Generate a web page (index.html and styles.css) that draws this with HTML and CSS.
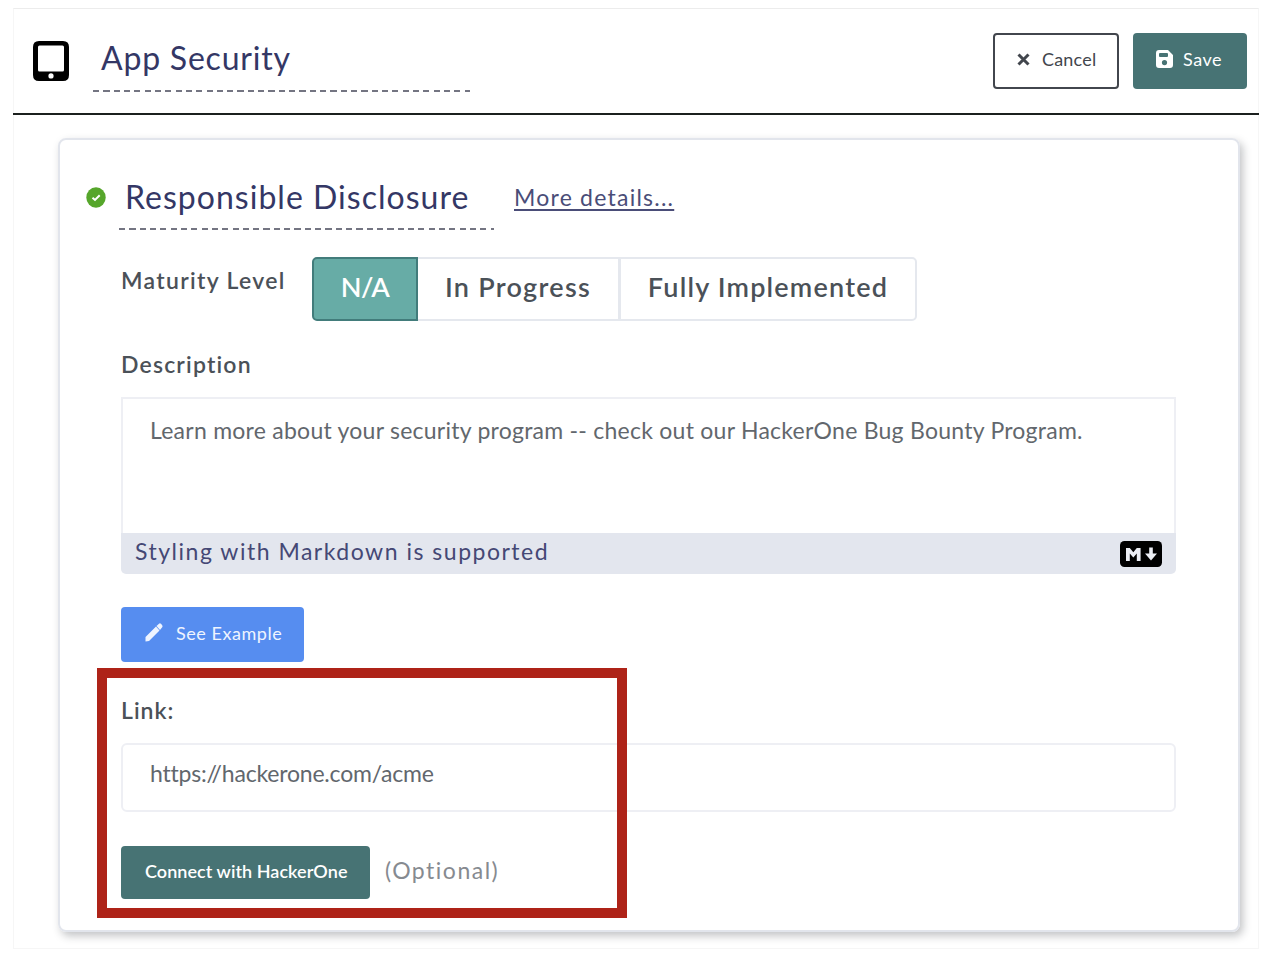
FILE: index.html
```html
<!DOCTYPE html>
<html lang="en">
<head>
<meta charset="utf-8">
<title>App Security</title>
<link rel="stylesheet" href="styles.css">
</head>
<body>
<main class="frame">
  <header class="header">
    <svg class="tablet" viewBox="0 0 36 40"><path fill="#000" fill-rule="evenodd" d="M6 0H30Q36 0 36 6V34Q36 40 30 40H6Q0 40 0 34V6Q0 0 6 0ZM5 6V29Q5 30.500 6.500 30.500H29.500Q31 30.500 31 29V6Q31 4.500 29.500 4.500H6.500Q5 4.500 5 6ZM18 32.300A2.600 2.600 0 1 0 18 37.500A2.600 2.600 0 1 0 18 32.300Z"/></svg>
    <h1 class="title title-app"><span>App Security</span></h1>
    <div class="actions">
      <button class="btn btn-cancel"><svg class="ico-x" viewBox="0 0 13 13"><path d="M1.500 1.500L11.500 11.500M11.500 1.500L1.500 11.500" stroke="currentColor" stroke-width="3" fill="none"/></svg><span>Cancel</span></button>
      <button class="btn btn-save"><svg class="ico-save" viewBox="0 0 17 18"><path fill="currentColor" fill-rule="evenodd" d="M3 0H12L17 5V15Q17 18 14 18H3Q0 18 0 15V3Q0 0 3 0ZM4 3Q3 3 3 4V6Q3 7 4 7H11Q12 7 12 6V4Q12 3 11 3ZM8.500 10A2.600 2.600 0 1 0 8.500 15.200A2.600 2.600 0 1 0 8.500 10Z"/></svg><span>Save</span></button>
    </div>
  </header>
  <section class="card">
    <div class="card-head">
      <svg class="check" viewBox="0 0 20 21"><ellipse cx="10" cy="10.500" rx="9.700" ry="10.300" fill="#56a62b"/><path d="M6.500 10.800L9 13L13.700 8.300" stroke="#fff" stroke-width="2" fill="none"/></svg>
      <h2 class="title title-card"><span>Responsible Disclosure</span></h2>
      <a class="more"><span>More details...</span></a>
    </div>
    <div class="body">
      <div class="maturity">
        <span class="label label-maturity">Maturity Level</span>
        <div class="levels">
          <span class="level level-na active">N/A</span>
          <span class="level level-progress">In Progress</span>
          <span class="level level-full">Fully Implemented</span>
        </div>
      </div>
      <div class="label label-desc"><span>Description</span></div>
      <div class="editor">
        <div class="editor-text"><span>Learn more about your security program -- check out our HackerOne Bug Bounty Program.</span></div>
        <div class="editor-foot"><span>Styling with Markdown is supported</span>
          <svg class="md" viewBox="0 0 42 26"><rect width="42" height="26" rx="4.500" fill="#000"/><path d="M6 20V7H9.800L13.300 11.300L16.800 7H20.600V20H16.800V12.500L13.300 16.500L9.800 12.500V20Z" fill="#eceef5"/><path d="M29.200 6.500H32.800V12.500H37L31 19.500L25 12.500H29.200Z" fill="#eceef5"/></svg>
        </div>
      </div>
      <button class="btn btn-example"><svg class="ico-pen" viewBox="0 0 18 19"><path fill="currentColor" d="M0.500 14L11 3.500L14.500 7.500L4 18L0.500 18.500ZM11.500 3L14 0.700Q15 0 16 0.800L17.200 2.200Q18 3.200 17.200 4.200L15 7Z"/></svg><span>See Example</span></button>
      <div class="label label-link"><span>Link:</span></div>
      <div class="input"><span>https://hackerone.com/acme</span></div>
      <div class="connect">
        <button class="btn btn-connect"><span>Connect with HackerOne</span></button>
        <span class="optional">(Optional)</span>
      </div>
    </div>
    <div class="highlight"></div>
  </section>
</main>
</body>
</html>
```
FILE: styles.css
```css
* { box-sizing: border-box; }
body { margin: 0; background: #fff; font-family: Lato, "Open Sans", sans-serif; font-variant-ligatures: none; color: #4b5158; overflow: hidden; }
svg { display: block; flex: none; }
.frame { margin: 8px 0 0 13px; width: 1246px; height: 941px; border: 1px solid #f6f6f6; border-top-color: #ececec; }
.header { display: flex; height: 106px; margin: 0 -1px; padding: 24px 12px 0 20px; border-bottom: 2px solid #1b201e; }
.tablet { width: 36px; height: 40px; margin-top: 8px; }
.title { margin: 0; font-weight: 400; color: #343765; font-size: 32px; line-height: 40px; white-space: nowrap; background: repeating-linear-gradient(90deg, #747582 0 6.200px, transparent 6.200px 10.320px) left bottom / 100% 2px no-repeat; }
.title-app { width: 377px; height: 59px; margin-left: 24px; padding: 5px 0 0 8px; letter-spacing: 0.800px; }
.actions { display: flex; gap: 14px; margin-left: auto; }
.btn { display: flex; align-items: center; border: 0; border-radius: 4px; font-family: inherit; font-size: 18px; line-height: 24px; padding: 0 0 4px; white-space: nowrap; }
.btn-cancel { width: 126px; height: 56px; padding-left: 22px; border: 2px solid #42464d; background: #fff; color: #42464d; gap: 12px; letter-spacing: 0.200px; }
.ico-x { width: 13px; height: 13px; }
.btn-save { width: 114px; height: 56px; padding-left: 23px; background: #477374; color: #fff; gap: 10px; letter-spacing: 0.500px; }
.ico-save { width: 17px; height: 18px; }
.card { position: relative; width: 1182px; height: 794px; margin: 23px 0 0 44px; padding: 38px 62px 0 26px; border: 2px solid #e2e5ec; border-radius: 8px; box-shadow: 3px 4px 8px rgba(40, 43, 50, 0.280); }
.card-head { display: flex; height: 52px; }
.check { width: 20px; height: 21px; margin-top: 9px; }
.title-card { width: 375px; height: 52px; margin: -1px 0 0 13px; padding-left: 6px; height: 53px; letter-spacing: 1.020px; }
.more { height: 33px; margin: 5px 0 0 20px; font-size: 23px; line-height: 28px; letter-spacing: 1.230px; color: #4a4d78; }
.more span { text-decoration: underline; text-decoration-thickness: 2px; text-underline-offset: 3px; text-decoration-skip-ink: none; }
.body { margin-left: 35px; }
.maturity { display: flex; margin-top: 27px; }
.label { font-weight: 600; font-size: 23px; line-height: 30px; }
.label-maturity { width: 191px; margin-top: 8px; letter-spacing: 1.320px; }
.levels { display: flex; width: 605px; height: 64px; border-radius: 5px; }
.level { height: 64px; border: 2px solid #e5e8ee; font-weight: 600; font-size: 27px; line-height: 56px; text-align: center; white-space: nowrap; }
.level-na { width: 106px; border-color: #427c7b; border-radius: 5px 0 0 5px; background: #67aca6; color: #fff; letter-spacing: -0.500px; }
.level-progress { width: 202px; border-left: 0; letter-spacing: 1.270px; }
.level-full { flex: 1; border-radius: 0 5px 5px 0; border-left-width: 1px; letter-spacing: 1.200px; }
.label-desc { margin-top: 28px; letter-spacing: 1.180px; }
.editor { width: 1055px; margin-top: 18px; }
.editor-text { height: 136px; padding: 16px 27px; border: 2px solid #eeeff4; border-bottom: 0; font-size: 23px; line-height: 30px; letter-spacing: 0.250px; white-space: nowrap; color: #62676d; }
.editor-foot { display: flex; align-items: center; justify-content: space-between; height: 41px; padding: 0 14px; background: #e3e6ee; border-radius: 0 0 5px 5px; color: #454875; font-size: 23px; line-height: 30px; letter-spacing: 1.510px; }
.editor-foot span { padding-bottom: 5px; }
.md { width: 42px; height: 26px; }
.btn-example { width: 183px; height: 55px; margin-top: 33px; padding-left: 24px; gap: 13px; background: #568df0; color: #eef4ff; letter-spacing: 0.550px; }
.ico-pen { width: 18px; height: 19px; }
.label-link { margin-top: 33px; letter-spacing: 1px; }
.input { width: 1055px; height: 69px; margin-top: 18px; padding: 13px 27px; border: 2px solid #eeeff4; border-radius: 6px; font-size: 23px; line-height: 30px; letter-spacing: -0.200px; color: #62676d; }
.connect { display: flex; align-items: center; margin-top: 34px; }
.btn-connect { width: 249px; height: 53px; padding-left: 24px; background: #477374; color: #fff; font-weight: 600; letter-spacing: 0.050px; }
.optional { margin-left: 15px; padding-bottom: 5px; color: #868a90; font-size: 23px; line-height: 30px; letter-spacing: 1.500px; }
.highlight { position: absolute; left: 37px; top: 528px; width: 530px; height: 250px; border: 10px solid #ae2318; }
```
